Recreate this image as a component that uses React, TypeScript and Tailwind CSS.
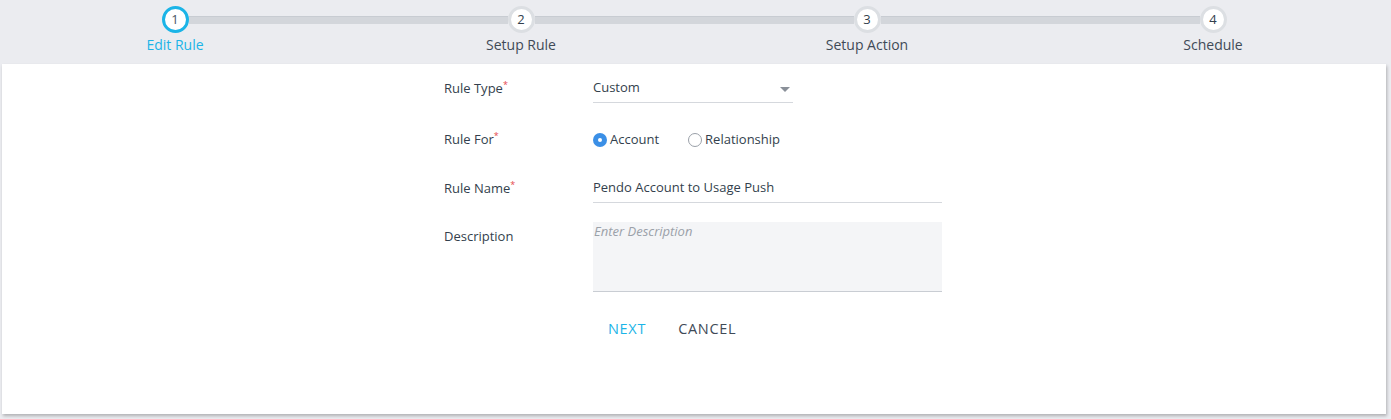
import React from 'react'

const steps = ['Edit Rule', 'Setup Rule', 'Setup Action', 'Schedule']

const Req = () => <span className="text-[#e5484d] text-[9px] align-top relative -top-[1px]">*</span>

export default function App() {
  return (
    <div
      className="w-[1391px] h-[419px] bg-[#ebecf0] pl-[2px] overflow-hidden text-[#333f4d]"
      style={{ fontFamily: '"Open Sans", "Liberation Sans", sans-serif' }}
    >
      {/* Stepper */}
      <div className="grid grid-cols-4 w-[1384px] h-[64px] pt-[6px]">
        {steps.map((s, i) => {
          const active = i === 0
          return (
            <div key={s} className="flex flex-col items-center">
              <div className="flex items-center w-full h-[27px]">
                <div className={`flex-1 h-[8px] ${i === 0 ? 'bg-transparent' : 'bg-[#d3d6db] border-t border-[#c8ccd2]'}`} />
                <div
                  className={`w-[27px] h-[27px] rounded-full bg-white flex items-center justify-center text-[13px] shrink-0 ${
                    active ? 'border-[3px] border-[#1bb4e7] text-[#4a5563]' : 'border-[3px] border-[#dcdfe3] text-[#333f4d]'
                  }`}
                >
                  {i + 1}
                </div>
                <div className={`flex-1 h-[8px] ${i === 3 ? 'bg-transparent' : 'bg-[#d3d6db] border-t border-[#c8ccd2]'}`} />
              </div>
              <div className={`mt-[2px] text-[14px] leading-[20px] ${active ? 'text-[#1bb4e7]' : 'text-[#3f4a57]'}`}>{s}</div>
            </div>
          )
        })}
      </div>

      {/* Card */}
      <div className="w-[1384px] h-[350px] bg-white shadow-[1px_2px_3px_rgba(0,0,0,0.25)]">
        <div className="w-[498px] ml-[442px] pt-[8px] text-[13px]">
          <div className="flex h-[31px] items-center">
            <div className="w-[149px] pt-[2px]">Rule Type<Req /></div>
            <div className="w-[200px] h-full flex items-center justify-between border-b border-[#d5d8dd] pt-[1px]">
              <span>Custom</span>
              <svg width="10" height="6" viewBox="0 0 10 6" className="mr-[3px] mt-[4px]">
                <path d="M0 0 L10 0 L5 5 Z" fill="#8a9099" />
              </svg>
            </div>
          </div>

          <div className="flex h-[24px] items-center mt-[24px] pt-[1px]">
            <div className="w-[149px]">Rule For<Req /></div>
            <label className="flex items-center">
              <span className="w-[14px] h-[14px] rounded-full bg-[#3b8fe6] flex items-center justify-center">
                <span className="w-[4px] h-[4px] rounded-full bg-white" />
              </span>
              <span className="ml-[3px]">Account</span>
            </label>
            <label className="flex items-center ml-[29px]">
              <span className="w-[14px] h-[14px] rounded-full border border-[#9aa0a8] bg-white" />
              <span className="ml-[3px]">Relationship</span>
            </label>
          </div>

          <div className="flex h-[31px] items-center mt-[21px]">
            <div className="w-[149px] pt-[2px]">Rule Name<Req /></div>
            <div className="w-[349px] h-full flex items-center border-b border-[#d5d8dd] pt-[2px]">
              Pendo Account to Usage Push
            </div>
          </div>

          <div className="flex mt-[19px]">
            <div className="w-[149px] pt-[5px]">Description</div>
            <div className="w-[349px] h-[70px] bg-[#f4f5f7] border-b border-[#c9cdd3] px-[1px] italic text-[#9ba1a9]">
              Enter Description
            </div>
          </div>

          <div className="flex mt-[22px] ml-[149px]">
            <button className="h-[30px] px-[15px] text-[#1bb4e7] text-[14.5px] tracking-[0.7px]">NEXT</button>
            <button className="h-[30px] px-[15px] ml-[2px] text-[#3f4a57] text-[14.5px] tracking-[0.7px]">CANCEL</button>
          </div>
        </div>
      </div>
    </div>
  )
}
